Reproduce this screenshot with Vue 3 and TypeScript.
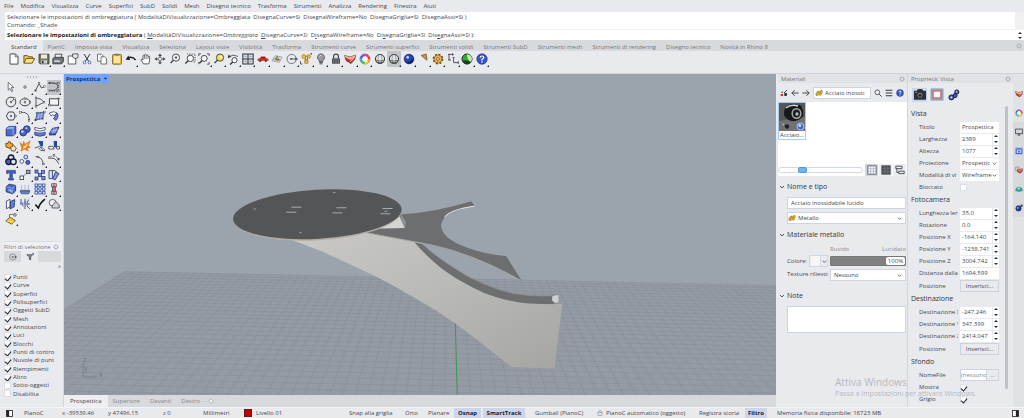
<script setup lang="ts">
import { h, ref } from 'vue'

const arc = (r: number, w: number): string => {
  const colours = ['#ff9c1a', '#f4e11c', '#3fc43a', '#21b8d8', '#3a55e8', '#a23be0', '#e82a8c', '#ee3024']
  const len = 2 * Math.PI * r
  const part = len / colours.length
  return colours
    .map((c, i) => `<circle cx="6" cy="6" r="${r}" fill="none" stroke="${c}" stroke-width="${w}" stroke-dasharray="${part} ${len - part}" stroke-dashoffset="${-part * i}"/>`)
    .join('')
}
const line = (d: string, extra = ''): string =>
  `<path d="${d}" fill="none" stroke="#33363c" stroke-width=".8" ${extra}/>`
const dots = (...p: number[][]): string =>
  p.map(([x, y]) => `<rect x="${x - 0.8}" y="${y - 0.8}" width="1.6" height="1.6" fill="#fff" stroke="#444" stroke-width=".5"/>`).join('')
const lens = (x: number, y: number, r: number, fill = '#f8f8fa'): string =>
  `<circle cx="${x}" cy="${y}" r="${r}" fill="${fill}" stroke="#3a3d43" stroke-width=".9"/><path d="M${x - r * 0.7} ${y + r * 0.7}L${x - r - 1.8} ${y + r + 1.8}" stroke="#3a3d43" stroke-width="1.4"/>`
const ball = (c: string, d: string): string =>
  `<circle cx="6" cy="6" r="4.8" fill="${c}" stroke="${d}" stroke-width=".7"/><circle cx="4.6" cy="4.2" r="1.5" fill="#fff" opacity=".7"/>`
const wire = `<circle cx="6" cy="6" r="4.6" fill="#e4e4e6" stroke="#33363c"/><ellipse cx="6" cy="6" rx="2" ry="4.6" fill="none" stroke="#777" stroke-width=".6"/><path d="M1.6 7.2Q6 9 10.4 7.2" fill="none" stroke="#555" stroke-width=".8"/><path d="M2.5 9Q6 11 9.5 9" stroke="#444" fill="none"/>`
const layers = `<path d="M.6 2.4L6 4L11.4 2L11 6L7 10.6L2 7.5Z" fill="#c92c22" stroke="#3d2a2a" stroke-width=".6"/><path d="M.6 2.4L6 4.2L11.4 2L10.7 4.2L6.4 6.9L1.4 4.4Z" fill="#f4b48f"/><path d="M6 8.6L10.8 4.5" stroke="#f7e8e0" stroke-width=".8"/>`
const metal = `<path d="M1 7.5L4 3L7 3.5L10.5 2L11 5L9 9.5L6 8.5L2.5 10.5Z" fill="#e0b13a" stroke="#7c5b12" stroke-width=".7"/><path d="M3 7L5 5L6.5 6.5L9 4.2" fill="none" stroke="#7c5b12" stroke-width=".8"/>`

const icons: Record<string, string> = {
  newFile: '<path d="M2 .9H7.4L10 3.5V11.1H2Z" fill="#fff" stroke="#3a3d43" stroke-width=".9"/><path d="M7.2 1V3.8H10" fill="none" stroke="#3a3d43" stroke-width=".7"/>',
  open: '<path d="M.9 10V2.6H4.5L5.5 3.8H9.4V5.2" fill="#f0c84a" stroke="#4b3d16" stroke-width=".8"/><path d="M1 10.2L3.2 5.4H11.6L9.2 10.2Z" fill="#ffe07a" stroke="#4b3d16" stroke-width=".8"/>',
  save: '<path d="M1 1.2H11V10.8H2L1 9.8Z" fill="#727a5a" stroke="#33363c" stroke-width=".8"/><rect x="3" y="1.5" width="6" height="4" fill="#e9ecd8"/><rect x="3.2" y="7.2" width="5.8" height="3.4" fill="#c9cbc6"/><rect x="4" y="7.8" width="1.6" height="2.6" fill="#33363c"/>',
  print: '<path d="M3.2 5V1.2H10L8.8 5" fill="#f1f1f1" stroke="#33363c" stroke-width=".8"/><path d="M.8 5.6L2.5 4.3H11.4V8.6L9.8 10.8H.8Z" fill="#6f7278" stroke="#33363c" stroke-width=".8"/><rect x="2.2" y="7.4" width="6" height="1.6" fill="#d5d6d8"/>',
  props: '<path d="M1.2 3H5L8.8 3V11H1.2Z" fill="#fff" stroke="#3a3d43" stroke-width=".8"/><path d="M5.5 1L11 .8V4.6L8 5.6L5.6 4Z" fill="#e6e7ea" stroke="#3a3d43" stroke-width=".8"/>',
  cut: '<path d="M3 1L7.6 8.2M9 1L4.4 8.2" stroke="#33363c"/><circle cx="3.5" cy="9.5" r="1.4" fill="none" stroke="#4a63b8" stroke-width=".9"/><circle cx="8.5" cy="9.5" r="1.4" fill="none" stroke="#4a63b8" stroke-width=".9"/>',
  copy: '<path d="M1.5 1.2H5.4L7 2.8V8.2H1.5Z" fill="#fff" stroke="#55585e" stroke-width=".8"/><path d="M5 3.8H8.8L10.6 5.6V11H5Z" fill="#fff" stroke="#55585e" stroke-width=".8"/>',
  paste: '<rect x="1.6" y="1.6" width="8.8" height="9.6" rx=".6" fill="#f1c445" stroke="#6b5216" stroke-width=".8"/><rect x="3" y="3.2" width="6" height="6.8" fill="#ffe69a"/><rect x="4" y=".7" width="4" height="2" fill="#7a7d83"/>',
  undo: '<path d="M3 5.2Q7 2.8 10.6 7" fill="none" stroke="#1d1f23" stroke-width="1.5"/><path d="M.6 6.8L3.4 2.6L5.2 7Z" fill="#1d1f23"/>',
  hand: '<path d="M3.6 10.9L.9 6.8Q1.6 5.6 3 7V2.8Q3.8 1.8 4.5 2.8V1.8Q5.4.6 6.2 1.8V2.4Q7.2 1.2 8 2.6V3.4Q9.4 2.6 9.6 4V8L8.6 10.9Z" fill="#fbfbfc" stroke="#3a3d43" stroke-width=".8"/><path d="M4.5 3V6M6.2 2.5V6M8 3.4V6" stroke="#3a3d43" stroke-width=".6"/>',
  pan: '<path d="M6 .4L8 3H4ZM6 11.6L8 9H4ZM.4 6L3 4.2V7.8ZM11.6 6L9 4.2V7.8Z" fill="#44474d"/><path d="M6 2V10M2 6H10" stroke="#5c5f66" stroke-width="1.1"/><ellipse cx="6" cy="6" rx="1.8" ry="1.8" fill="#e9eaee" stroke="#5c5f66" stroke-width=".7"/>',
  zoomDyn: lens(7, 4.6, 3.6) + line('M7 2.8V6.2M5.8 4.5H8.2'),
  zoomWin: lens(6.4, 5.4, 3.2) + line('M3 1H11V9H9', 'stroke-dasharray="1.2 1"'),
  zoomExt: lens(6.2, 5.4, 3) + line('M.8 3V.8H3M9 .8H11.2V3M.8 9V11.2M11.2 9V11.2H9'),
  zoomSel: lens(7, 4.6, 3.6, '#f3e05a') + '<circle cx="8" cy="4" r="1.4" fill="#fff6a8"/>',
  undoView: lens(7.5, 7.2, 2.6) + line('M2 3.8Q6 .6 10.8 3.4', 'stroke-width="1.2"') + '<path d="M.6 5L1.6 1.4L4.2 4Z" fill="#33363c"/>',
  views: '<rect x=".8" y="1" width="10.4" height="10" fill="#d5dbe0" stroke="#33363c"/><path d="M6 1V11M.8 6H11.2" stroke="#33363c"/><path d="M2.6 3.4H4.6M7.6 3.4H9.6M2.6 8.6H4.6M7.6 8.6H9.6" stroke="#8791a0" stroke-width=".8"/>',
  car: '<path d="M.6 7.8V5.8L2.8 5.2L4 3.6H8L9.2 5.2L11.4 5.8V7.8Z" fill="#d12822"/><path d="M4.2 5L4.9 4H7.5L8 5Z" fill="#8c1512"/><circle cx="3.2" cy="8" r="1.1" fill="#332"/><circle cx="8.8" cy="8" r="1.1" fill="#332"/>',
  plane: '<path d="M.8 7.8L4.2 2.6L11.2 4L8.4 9.4Z" fill="#d9dcdf" stroke="#8b8f95" stroke-width=".6"/><path d="M2.4 5.2L9.8 6.6M1.8 6.6L9 8.2M5.8 3L3.6 8.2M8.4 3.4L6 8.8" stroke="#8b8f95" stroke-width=".5"/><path d="M4.6 6L8.6 7" stroke="#cf2b22" stroke-width="1.2"/><path d="M4.8 6L6.8 3.4" stroke="#2a9c38" stroke-width="1.2"/>',
  target: '<circle cx="5.6" cy="6" r="4.6" fill="none" stroke="#5a5d63" stroke-width=".8"/><path d="M5 6H11.8" stroke="#33363c" stroke-width=".8"/><circle cx="5" cy="6" r="1.1" fill="#5a5d63"/><path d="M9 4.6L11.6 6L9 7.4Z" fill="#55585e"/>',
  select: '<path d="M4 3.4L8 3.4L6.5 8.4Z" fill="none" stroke="#6b5216" stroke-width=".8"/><circle cx="3.8" cy="3.6" r="2" fill="#f3c32c" stroke="#7b5a10" stroke-width=".5"/><circle cx="8.8" cy="3.4" r="1.8" fill="#f3c32c" stroke="#7b5a10" stroke-width=".5"/><rect x="4.8" y="7" width="3.2" height="3.2" fill="#f0b41c" stroke="#7b5a10" stroke-width=".5"/><path d="M.4 8V11H2.4M10.4.4H11.8V2" fill="none" stroke="#222" stroke-width=".7"/>',
  bulb: '<path d="M6 .8A3.6 3.6 0 0 1 7.9 7.4V8.4H4.1V7.4A3.6 3.6 0 0 1 6 .8Z" fill="#9a9ca0" stroke="#4d5056" stroke-width=".8"/><path d="M4.2 9.4H7.8M4.6 10.8H7.4" stroke="#4d5056"/><path d="M4.6 3.4Q5 2.2 6.4 2.2" stroke="#f3f3f3" stroke-width=".8" fill="none"/>',
  lock: '<path d="M3.6 5.4V3.4Q3.6 1.2 6 1.2T8.4 3.4V5.4" fill="none" stroke="#3f4248" stroke-width="1.2"/><rect x="2" y="5.2" width="8" height="5.6" rx=".5" fill="#54575d"/><path d="M3 7H9M3 9H9" stroke="#85888e" stroke-width=".6"/>',
  layers,
  wheel: '<circle cx="6" cy="6" r="5" fill="#fff" stroke="#444" stroke-width=".6"/>' + arc(3.9, 2.1),
  wire,
  blueBall: ball('#1f46b4', '#14214f') + '<path d="M6 10.7A4.7 4.7 0 0 0 10.6 5Q8 9 3 9.4" fill="#0c1f63"/>',
  flag: '<path d="M4.2 2.4L9.2 1L10 7.2L7.4 5.2Z" fill="#e78f2a" stroke="#4c3413" stroke-width=".6"/>',
  gear: '<circle cx="6" cy="6" r="4.4" fill="#e4a63a" stroke="#60420f" stroke-width="2" stroke-dasharray="1.8 1.65"/><circle cx="6" cy="6" r="3.9" fill="#e9b450" stroke="#8a6116" stroke-width=".7"/><circle cx="6" cy="6" r="1.4" fill="#f3f1ec" stroke="#60420f" stroke-width=".7"/>',
  dims: line('M1 1.4H5M2 1.4V7M1 7H4M6.6 4.6V9.6H11.2M5.6 4.6H7.6M11.2 8V11') + '<path d="M5 0L7 1.4L5 2.8Z" fill="#444"/>',
  greenBall: '<circle cx="6" cy="6" r="5" fill="#36a832" stroke="#1a2b1a" stroke-width="1"/><path d="M6 1.2A4.8 4.8 0 0 1 10 9Q6 7 6 1.2Z" fill="#c9e8b4"/><path d="M1.6 8Q5 6 10 9.2A4.8 4.8 0 0 1 1.6 8Z" fill="#1c3a1c"/>',
  help: '<circle cx="6" cy="6" r="5.2" fill="#3654c8" stroke="#1e2f85" stroke-width=".7"/><path d="M4.2 4.6Q4.3 3 6 3T7.8 4.6Q7.8 5.6 6 6.4V7.4" fill="none" stroke="#fff" stroke-width="1.2"/><circle cx="6" cy="9" r=".8" fill="#fff"/>',
  arrow: '<path d="M3.2 1.4L9 6.6H6.2L7.8 10L6.6 10.6L5 7.4L3.2 9.2Z" fill="#fff" stroke="#44474d" stroke-width=".7"/>',
  point: '<circle cx="6" cy="6" r="1.2" fill="#fff" stroke="#44474d" stroke-width=".8"/>',
  polyline: line('M1.6 9.6L5 2.4L7.4 7L10.4 5.6') + dots([1.6, 9.6], [5, 2.4], [10.4, 5.6]),
  curvePts: line('M1.6 2H5Q10.8 3 9.6 6.4Q8.8 10 2 9.4') + line('M1.6 2H10.6M10.6 2V10M2 10H10.6', 'stroke-dasharray="1 1"') + dots([1.6, 2], [10.4, 2], [1.8, 9.8], [10.2, 9.8]),
  circle: '<circle cx="6" cy="6" r="4.8" fill="none" stroke="#33363c" stroke-width=".9"/>' + line('M6 6L9.4 2.8') + dots([6, 6], [9.4, 2.6]),
  ellipse: '<ellipse cx="6" cy="6.2" rx="5" ry="3.6" fill="none" stroke="#33363c" stroke-width=".9"/>' + dots([6, 6.2], [6, 2.6], [11, 6.2]),
  arcPts: line('M2 1.8V10.4L10 6.2Q8 2.4 2 1.8') + dots([2, 1.8], [2, 10.4], [10, 6.2]),
  rect: '<rect x="1.4" y="2.8" width="9.2" height="6.4" fill="#f4f4f6" stroke="#33363c" stroke-width=".9"/>' + dots([1.4, 9.2], [10.6, 2.8]),
  polygon: '<path d="M1.4 6L3.6 2H8.4L10.6 6L8.4 10H3.6Z" fill="none" stroke="#33363c" stroke-width=".9"/>' + dots([6, 6], [10.4, 6]),
  fillet: line('M1 2.4H4.5Q9.6 3 10 8V11', 'stroke-width="1.2"') + dots([1.4, 2.4], [10, 10.4]),
  surface: '<path d="M3 3L10.4 2L8.6 8.6L1.6 10Z" fill="#5f7fdc" stroke="#22305f" stroke-width=".7"/><path d="M5.4 2.8L4 9.4M8 2.4L6.4 9M2.6 5.4L9.8 4.4M2 7.8L9.2 6.6" stroke="#ccd7fa" stroke-width=".5"/>' + dots([3, 3], [10.4, 2], [8.6, 8.6], [1.6, 10]),
  sweep: '<path d="M1.4 3Q6 .4 9 3L6.6 5.4Q4.6 4 3 6Z" fill="#fff" stroke="#22305f" stroke-width=".7"/><path d="M9 3Q11.6 6 8 10.4L5.4 8.6Q7.8 6.8 6.6 5.4Z" fill="#5f7fdc" stroke="#22305f" stroke-width=".7"/>',
  box: '<path d="M1.2 3.4L4 1.4H10.8V8.4L8.4 10.8H1.2Z" fill="#4a6bd0" stroke="#1d2a5e" stroke-width=".8"/><path d="M1.4 3.6H8.2V10.6" fill="none" stroke="#b8c8f8" stroke-width=".7"/><path d="M1.8 3.2L4.2 1.8H10.2L8.2 3.2Z" fill="#93aaf0"/>',
  spheres: '<circle cx="7.8" cy="4.2" r="3.4" fill="#4467d2" stroke="#1d2a5e" stroke-width=".8"/><circle cx="4.2" cy="7.6" r="3.4" fill="#4467d2" stroke="#1d2a5e" stroke-width=".8"/><circle cx="3.4" cy="6.6" r="1.3" fill="#c3d0fa"/><circle cx="7.2" cy="3.2" r="1" fill="#c3d0fa"/>',
  pipe: '<path d="M.8 2.4V4.8Q6 7.4 11.2 4.8V2.4Q6 5 .8 2.4Z" fill="#fff" stroke="#22305f" stroke-width=".7"/><path d="M.8 7V10Q6 12.4 11.2 10V7Q6 9.6.8 7Z" fill="#5f7fdc" stroke="#22305f" stroke-width=".7"/>',
  mesh: '<path d="M1 9L4.4 3.4L11 2L8 8.6Z" fill="#5f7fdc" stroke="#1d2a5e" stroke-width=".8"/><path d="M2.6 6.4L9.8 5M6.4 3L4 9M8.8 2.6L6 8.8" stroke="#dbe3fd" stroke-width=".5"/><path d="M1 9V10.4L8 10.2V8.6" fill="#33489c"/>',
  puzzle: '<path d="M.8 3.4H3Q3 1 4.6 1.4T5.4 3.4L8 4V7L5 8.4L1 7Z" fill="#f0a72c" stroke="#51390d" stroke-width=".8"/><path d="M5.4 7.6L8.6 5.6L11.4 8L9.6 11.2L6.4 10.6Z" fill="#e9e3d2" stroke="#51390d" stroke-width=".8"/>',
  explode: '<path d="M.8 2.6L3.6 5L4.6 1.4L6.2 4.2L11.2.8L9.2 5.8L11.4 7.4L8.2 8.2L9.4 11L5.4 9.2L2 11.2L2.8 7.6Z" fill="#f0821c" stroke="#b8540c" stroke-width=".4"/><path d="M3.4 9.6L5 6.2L9.6 2.8L7 7.4Z" fill="#ffd978"/>',
  trim: '<path d="M4 1H9V6.4H6.6Z" fill="#264aa4"/>' + line('M.8 8L5.4 6.4L10.6 10.6H7L4.6 8') + '<path d="M6 7L10.6 9V11Z" fill="#fff" stroke="#444" stroke-width=".5"/>',
  split: '<path d="M5.6 1H9V8L6 7Z" fill="#264aa4"/><path d="M.8 6.4H5L6.2 9H.8ZM8.2 6.4H11.4V9H8.8Z" fill="#fff" stroke="#33363c" stroke-width=".8"/>',
  group: '<circle cx="6" cy="3.8" r="2.8" fill="#cdd8fa" stroke="#14182a" stroke-width="1.3"/><circle cx="3.6" cy="7.8" r="2.8" fill="#3d62cf" stroke="#14182a" stroke-width="1.3"/><circle cx="8.4" cy="7.8" r="2.8" fill="#dfe5f8" stroke="#14182a" stroke-width="1.3"/>',
  ungroup: '<circle cx="6.8" cy="3" r="1.9" fill="#cdd8fa" stroke="#2c3a6e" stroke-width=".8"/><circle cx="2.8" cy="7.4" r="1.9" fill="#fff" stroke="#2c3a6e" stroke-width=".8"/><circle cx="8.8" cy="8.4" r="2.1" fill="#3d62cf" stroke="#2c3a6e" stroke-width=".8"/>',
  edit: line('M1.4 2.6Q8 2.4 9.4 10', 'stroke-width="1.2"') + dots([4, 3], [9.4, 10]),
  editPts: line('M1 4.2Q7.4 2.8 10.8 9.8', 'stroke-width="1.1"') + line('M1 3L6 1L10.6 5', 'stroke-dasharray="1 1"') + dots([1.4, 3.8], [6, 1.4], [10.6, 5.2]),
  text: '<path d="M1.6 1.4H10.4V4.4H8.8V3.6H7.4V9.4H8.4V11H3.6V9.4H4.8V3.6H3.2V4.4H1.6Z" fill="#3c62cf" stroke="#1d2a5e" stroke-width=".6"/>',
  move: '<rect x="1" y="7" width="3.6" height="3.6" fill="#fff" stroke="#33363c" stroke-width=".8"/><rect x="7.6" y="1.2" width="3.4" height="3.4" fill="#8fa8ef" stroke="#33363c" stroke-width=".8"/>' + line('M4.8 6.6L7.4 4.8', 'stroke-dasharray="1 .8"'),
  array: '<g fill="#6f8de4" stroke="#22305f" stroke-width=".7"><rect x="1" y="1" width="3" height="3"/><rect x="7.6" y="1.4" width="3" height="3"/><rect x="4.4" y="4.6" width="3" height="3"/><rect x="1" y="8" width="3" height="3"/><rect x="7.8" y="7.6" width="3.2" height="3.2"/></g>',
  rotate: '<path d="M1 1.6H4.4V9.6H1Z" fill="#dfe6fb" stroke="#22305f" stroke-width=".8"/><path d="M7.6 3L11 4.6L7 11L4.6 9.6Z" fill="#7d99e8" stroke="#22305f" stroke-width=".8"/>' + line('M4 1.6Q7.6 1 8.8 3'),
  solid: '<path d="M1.2 3.6L4.2 1.2L10.6 2.4V8L7.6 10.8L1.2 8.8Z" fill="#4a6bd0" stroke="#1d2a5e" stroke-width=".8"/><path d="M1.4 3.8L7.6 5.2V10.4M7.6 5.2L10.4 2.6" stroke="#aec0f6" stroke-width=".6" fill="none"/><path d="M3.4 7H6V9.4" stroke="#fff" fill="none" stroke-width=".8"/>',
  loft: '<path d="M1 8.2H11L9.6 10.8H2.4Z" fill="#5f7fdc" stroke="#22305f" stroke-width=".6"/><path d="M2.6 2V7M6 2V7M9.4 2V7" stroke="#a9bbee" stroke-width="1"/><path d="M1.2 7.4H10.8" stroke="#33363c" stroke-width=".7"/>',
  gridArr: '<g fill="#e7ecfb" stroke="#2e4aa3" stroke-width=".8"><rect x="1" y="1" width="2.4" height="2.4"/><rect x="4.8" y="1" width="2.4" height="2.4"/><rect x="8.6" y="1" width="2.4" height="2.4"/><rect x="1" y="4.8" width="2.4" height="2.4"/><rect x="4.8" y="4.8" width="2.4" height="2.4"/><rect x="8.6" y="4.8" width="2.4" height="2.4"/><rect x="1" y="8.6" width="2.4" height="2.4"/><rect x="4.8" y="8.6" width="2.4" height="2.4"/><rect x="8.6" y="8.6" width="2.4" height="2.4"/></g>',
  mirror: '<rect x="3.8" y=".8" width="4.4" height="3" fill="#e6e7ea" stroke="#33363c" stroke-width=".8"/><rect x="3.8" y="8.2" width="4.4" height="3" fill="#e6e7ea" stroke="#33363c" stroke-width=".8"/><path d="M4.6 3.8V8.2M7.4 3.8V8.2" stroke="#33363c" stroke-width=".8"/><path d="M6 1.4V10.8" stroke="#d8262a" stroke-width="1.3"/>',
  cage: '<path d="M1.4 3L5 1.4V9L1.4 10.6Z" fill="#fff" stroke="#22305f" stroke-width=".8"/><path d="M5.6 3.4L9.8 1.6L9.2 8.8L5 11Z" fill="#5f7fdc" stroke="#22305f" stroke-width=".8"/>',
  tools: line('M2 1V5L4.4 8.4M6 .8V11M9.6 1.6L8 5.4V8L11 11', 'stroke-width="1.4"') + '<path d="M1 4.4H4.6V6.4H1ZM5 3H7.2V6.4H5ZM7.6 5H10.8V6.8H7.6Z" fill="#6a86d8"/>',
  check: '<path d="M1.4 6.6L4.4 10Q6 5 11 1.2" fill="none" stroke="#16181c" stroke-width="1.6"/>',
  shapes: '<circle cx="4.6" cy="4.8" r="3.4" fill="#f0f0f2" stroke="#44474d" stroke-width=".8"/><path d="M4 8L7.8 3.4L11.2 7V10H4Z" fill="#cfd0d4" stroke="#44474d" stroke-width=".8"/>',
  ship: '<path d="M.8 8L5 4L10.4 7.6L6.6 11.2Z" fill="#f0c23a" stroke="#6a4c10" stroke-width=".8"/><path d="M2 8L8.6 9.2" stroke="#fff0a8" stroke-width=".8"/><path d="M4.6 4V1.6H8.8V.8H11V3H8.8V2.2" fill="#fff" stroke="#44474d" stroke-width=".8"/>',
  cog: '<circle cx="6" cy="6" r="3.4" fill="none" stroke="#b4b6bb" stroke-width="2"/><circle cx="6" cy="6" r="4.8" fill="none" stroke="#b4b6bb" stroke-width="1.4" stroke-dasharray="2 1.8"/>',
  filter: '<path d="M1.2 2.6H10L7 6V10.6L5 9.4V6Z" fill="#8b8e94" stroke="#2d3036" stroke-width=".9"/><path d="M9 .6H11.4V3" stroke="#2d3036" stroke-width=".9" fill="none"/>',
  dropper: '<path d="M6 6L10.6 1.4" stroke="#44474d" stroke-width="1.5"/><path d="M1 5L5 3.4L4 6Z" fill="#55585e"/><path d="M1 7.4H4.6V10.6H1Z" fill="#d6342b"/><path d="M6.4 6H10.4V10.4H6.4Z" fill="#33363c"/>',
  left: '<path d="M11.4 6H1.2M5.4 1.8L1.2 6L5.4 10.2" fill="none" stroke="#43464d" stroke-width="1.5"/>',
  right: '<path d="M.6 6H10.8M6.6 1.8L10.8 6L6.6 10.2" fill="none" stroke="#43464d" stroke-width="1.5"/>',
  metal,
  search: '<circle cx="5" cy="5" r="3.6" fill="none" stroke="#43464d" stroke-width="1.2"/><path d="M7.6 7.6L11.4 11.4" stroke="#43464d" stroke-width="1.5"/>',
  menu: '<path d="M1 2H11M1 6H11M1 10H11" stroke="#33363c" stroke-width="1.6"/>',
  thumbs: '<rect x="1" y="1" width="10" height="10" fill="#f2f3f6" stroke="#44474d" stroke-width=".9"/><path d="M1 4.3H11M1 7.7H11M4.3 1V11M7.7 1V11" stroke="#8d9097" stroke-width=".5"/>',
  rows: '<rect x="1" y="1" width="10" height="10" fill="#55585e" stroke="#44474d"/><path d="M1 4.3H11M1 7.7H11M4.3 1V11M7.7 1V11" stroke="#797c83" stroke-width=".5"/>',
  tree: '<path d="M1 1.4H8.4V4.4H1ZM4.6 7.4H11V10.4H4.6ZM2.2 4.4V9H4.6" fill="none" stroke="#44474d" stroke-width="1.1"/>',
  camera: '<path d="M.4 2.6H3L4.2 1H7.8L9 2.6H11.6V10.8H.4Z" fill="#2e3138"/><circle cx="6" cy="6.6" r="2.9" fill="#7b818c" stroke="#0e1014" stroke-width=".7"/><circle cx="6" cy="6.6" r="1.4" fill="#23262c"/><path d="M1.4 4H3.4" stroke="#9ea2ab" stroke-width=".7"/>',
  frame: '<rect x=".4" y=".8" width="11.2" height="10.4" fill="#8fb2c6" stroke="#6b8ea3" stroke-width=".5"/><rect x="2.4" y="2.8" width="7.2" height="6.4" fill="#fff" stroke="#e24a48" stroke-width="1"/>',
  chain: '<g fill="#3f5cae" stroke="#121b3c" stroke-width=".9"><circle cx="8.8" cy="3" r="2.1"/><circle cx="7" cy="6.6" r="2.1"/><circle cx="3.4" cy="8.4" r="2.5"/></g><circle cx="3.4" cy="8.4" r=".9" fill="#e9eefb"/><circle cx="8.6" cy="2.8" r=".8" fill="#d6e0fb"/>',
  monitor: '<rect x="1" y="1.6" width="10" height="7" fill="#d4d7da" stroke="#2d3036" stroke-width="1.1"/><path d="M4 10.6H8M6 8.6V10.6" stroke="#2d3036" stroke-width="1.2"/>',
  render: '<rect x=".8" y="1.2" width="10.4" height="9.6" fill="#3f66cf"/><path d="M.8 3H11.2" stroke="#c8d4f6" stroke-width="1"/><path d="M2.6 4.8H9.4V9H2.6Z" fill="#cfdcfb"/><circle cx="6" cy="7" r="1.5" fill="#3f66cf"/>',
  docs: '<path d="M1 1.6H6V7H1Z" fill="#ddd" stroke="#555" stroke-width=".7"/><path d="M3.6 4.4L7 5.4L11 3.8V8L8 10.8L4 9Z" fill="#cf4a32" stroke="#4a2a22" stroke-width=".6"/><path d="M4 5.4L7.2 7L10.6 5" stroke="#f6c6a8" fill="none"/>',
  env: '<path d="M.8 8.4A5.2 5.2 0 0 1 11.2 8.4Q6 11 .8 8.4Z" fill="#2fae9d" stroke="#1b6570" stroke-width=".6"/><path d="M3 5.6Q5 2.6 8 4.4L6 7Z" fill="#9fe2e8"/>',
  globe: '<circle cx="5.2" cy="6.6" r="4" fill="#234596" stroke="#111a3a" stroke-width=".9"/><circle cx="4" cy="5.8" r="1.3" fill="#9eb5ee"/><path d="M8.4 1H11.4V4H8.4Z" fill="#2d3036"/>',
  panelL: '<rect x=".8" y=".8" width="10.4" height="10.4" fill="#fff" stroke="#222" stroke-width="1.4"/><rect x="1" y="1" width="4.4" height="10" fill="#222"/>',
  panelR: '<rect x=".8" y=".8" width="10.4" height="10.4" fill="#fff" stroke="#222" stroke-width="1.4"/><rect x="6.6" y="1" width="4.4" height="10" fill="#222"/>',
  chevron: '<path d="M2 4L6 8L10 4" fill="none" stroke="#3f4248" stroke-width="1.8"/>',
  drop: '<path d="M2 4H10L6 9Z" fill="#17356f"/>',
  padlock: '<path d="M3.4 5V3Q3.4.8 6 .8T8.6 3V5" fill="none" stroke="#777a80"/><rect x="2" y="5" width="8" height="6" fill="none" stroke="#777a80"/>',
  diamond: '<path d="M6 1.4L10.6 6L6 10.6L1.4 6Z" fill="#f6f6f8" stroke="#94979d" stroke-width="1.2"/>',
}

const Ic = (p: { n: string }) =>
  h('svg', { viewBox: '0 0 12 12', 'aria-hidden': 'true', innerHTML: icons[p.n] })
Ic.props = ['n']

const menus = ['File', 'Modifica', 'Visualizza', 'Curve', 'Superfici', 'SubD', 'Solidi', 'Mesh', 'Disegno tecnico', 'Trasforma', 'Strumenti', 'Analizza', 'Rendering', 'Finestra', 'Aiuti']
const tabs = ['Standard', 'PianiC', 'Imposta vista', 'Visualizza', 'Seleziona', 'Layout viste', 'Visibilità', 'Trasforma', 'Strumenti curve', 'Strumenti superfici', 'Strumenti solidi', 'Strumenti SubD', 'Strumenti mesh', 'Strumenti di rendering', 'Disegno tecnico', 'Novità in Rhino 8']

interface Tool { n: string; fly?: boolean; on?: boolean }
const tool = (s: string): Tool => ({ n: s.replace(/[+*]/g, ''), fly: s.includes('+'), on: s.includes('*') })
const toolbar = 'newFile open save+ print+ props cut copy paste undo+ hand pan zoomDyn zoomWin zoomExt+ zoomSel+ undoView+ views+ car+ plane+ target+ select+ bulb+ lock+ layers+ wheel+ wire wire+* blueBall+ flag+ gear+ dims+ greenBall+ help+'.split(' ').map(tool)
const palette = 'arrow point+ polyline+ curvePts+* circle+ ellipse+ arcPts+ rect+ polygon+ fillet+ surface+ sweep+ box+ spheres+ pipe+ mesh+ puzzle+ explode trim split group+ ungroup+ edit+ editPts+ text move+ array rotate+ solid+ loft+ gridArr+ mirror+ cage+ tools+ check+ shapes+ ship+'.split(' ').map(tool)

const filters = ref(
  ['Punti', 'Curve', 'Superfici', 'Polisuperfici', 'Oggetti SubD', 'Mesh', 'Annotazioni', 'Luci', 'Blocchi', 'Punti di contro', 'Nuvole di punt', 'Riempimenti', 'Altro', 'Sotto-oggetti', 'Disabilita']
    .map((label, i) => ({ label, on: i < 13 })),
)

type Kind = 'text' | 'num' | 'select' | 'check' | 'button' | 'file'
interface Row { label: string; kind: Kind; value: string }
const row = (label: string, kind: Kind, value = ''): Row => ({ label, kind, value })
const groups: { title: string; rows: Row[] }[] = [
  { title: 'Vista', rows: [row('Titolo', 'text', 'Prospettica'), row('Larghezza', 'num', '2389'), row('Altezza', 'num', '1077'), row('Proiezione', 'select', 'Prospettic'), row('Modalità di vi', 'select', 'Wireframe'), row('Bloccato', 'check')] },
  { title: 'Fotocamera', rows: [row('Lunghezza ler', 'num', '35.0'), row('Rotazione', 'num', '0.0'), row('Posizione X', 'num', '-164.140'), row('Posizione Y', 'num', '-1238.741'), row('Posizione Z', 'num', '3004.742'), row('Distanza dalla', 'text', '1694.599'), row('Posizione', 'button', 'Inserisci...')] },
  { title: 'Destinazione', rows: [row('Destinazione X', 'num', '-247.246'), row('Destinazione Y', 'num', '347.399'), row('Destinazione Z', 'num', '2414.047'), row('Posizione', 'button', 'Inserisci...')] },
  { title: 'Sfondo', rows: [row('NomeFile', 'file', '(nessuno)'), row('Mostra', 'check', 'on'), row('Grigio', 'check', 'on')] },
]
const sideTabs = ['layers', 'wheel', 'monitor', 'render', 'docs', 'env', 'globe']

// Ground grid, projected towards a single vanishing point.
const vp = { x: 448, y: 66 }
const rays: string[] = []
for (let i = -75; i <= 75; i++) {
  rays.push(`M${vp.x} ${vp.y}L${(vp.x + 9 + i * 13).toFixed(1)} 400`)
}
const courses: string[] = []
for (let inv = 1 / 204; inv > 1 / 360; inv -= 0.0000627) {
  const y = vp.y + 1 / inv
  courses.push(`M64 ${y.toFixed(1)}L780 ${(y + 15).toFixed(1)}`)
}
const gridPath = rays.join('') + courses.join('')
</script>

<template>
  <div class="app">
    <nav class="menu">
      <button v-for="m in menus" :key="m">{{ m }}</button>
    </nav>

    <section class="command">
      <div class="history">
        <p>Selezionare le impostazioni di ombreggiatura ( ModalitàDiVisualizzazione=Ombreggiata&nbsp; DisegnaCurve=Sì&nbsp; DisegnaWireframe=No&nbsp; DisegnaGriglia=Sì&nbsp; DisegnaAssi=Sì )</p>
        <p>Comando: _Shade</p>
      </div>
      <div class="prompt">
        <p><b>Selezionare le impostazioni di ombreggiatura</b> ( <u>M</u>odalitàDiVisualizzazione=<i>Ombreggiata</i>&nbsp; <u>D</u>isegnaCurve=<i>Sì</i>&nbsp; D<u>i</u>segnaWireframe=<i>No</i>&nbsp; Di<u>s</u>egnaGriglia=<i>Sì</i>&nbsp; Dis<u>e</u>gnaAssi=<i>Sì</i> ):</p>
        <span class="spin"><button aria-label="Su"></button><button aria-label="Giù"></button></span>
      </div>
    </section>

    <nav class="tabs">
      <button v-for="(t, i) in tabs" :key="t" :class="{ active: i === 0 }">{{ t }}</button>
      <Ic n="cog" class="i6 push" />
    </nav>

    <div class="toolbar">
      <div class="tools">
        <button v-for="(t, i) in toolbar" :key="i" class="tool" :class="{ fly: t.fly, on: t.on }" :aria-label="t.n"><Ic :n="t.n" class="i12" /></button>
      </div>
    </div>

    <main>
      <aside class="left">
        <div class="grip"></div>
        <div class="palette">
          <button v-for="(t, i) in palette" :key="i" class="tool" :class="{ fly: t.fly, on: t.on }" :aria-label="t.n"><Ic :n="t.n" class="i12" /></button>
        </div>
        <header class="bar"><span>Filtri di selezione</span><Ic n="cog" class="i6" /></header>
        <div class="ftabs">
          <button aria-label="Osnap"><Ic n="target" class="i8" /></button>
          <button class="active" aria-label="Filtro"><Ic n="filter" class="i8" /></button>
        </div>
        <div class="more">»</div>
        <div class="filters">
          <label v-for="f in filters" :key="f.label"><input v-model="f.on" type="checkbox" /><span>{{ f.label }}</span></label>
        </div>
      </aside>

      <section class="view">
        <div class="scene">
          <svg class="canvas" viewBox="64 74 711 321" preserveAspectRatio="xMinYMin slice" aria-label="Vista prospettica">
            <defs>
              <clipPath id="ground"><path d="M64 309L124 271L775 285V400H64Z" /></clipPath>
              <linearGradient id="body" x1="0" y1="0" x2="1" y2="1">
                <stop offset="0" stop-color="#cbcac7" /><stop offset=".5" stop-color="#b9b9b7" /><stop offset="1" stop-color="#a5a5a2" />
              </linearGradient>
            </defs>
            <rect x="0" y="0" width="1600" height="900" fill="#9ba3ac" />
            <path d="M64 309L124 271L775 285V400H64Z" fill="#949ba4" />
            <path :d="gridPath" clip-path="url(#ground)" fill="none" stroke="#868d97" stroke-width=".5" />
            <path d="M454.700 321L456.700 395" stroke="#3f9a4a" stroke-width="1" />
            <path d="M289 239C322 250 345 262 377 277C405 292 430 306 453 322C474 337 492 352 511 366.700L554 368L561.500 303.500L553 304C525 304 498 299 460 280.500C440 269 426 256 414 242L412 236L360 226Z" fill="url(#body)" />
            <path d="M414 242C426 256 440 269 460 280.500C490 299 520 305 554 303.500L552.500 295.500C515 297 495 290 467 276C447 264 434 255 422 244Z" fill="#6d6e70" />
            <path d="M422 244C434 255 447 264 467 276C495 290 515 297 552.500 295.500" fill="none" stroke="#8a8b8b" stroke-width=".7" />
            <path d="M551.500 296L557.700 294.800V302L554 302.400L551.500 300Z" fill="#d0d0ce" />
            <path d="M402 214Q435 212 470.700 201L474 206C452 208 440.500 217 440.700 226C441 240 470 252 505.700 256L520.700 280C482 258 445 246 413 241Q385 236 365 232Z" fill="#6d6e70" />
            <path d="M474 206C457 208 448 212 444 217" fill="none" stroke="#e3e3e2" stroke-width="1" />
            <path d="M365 232.500Q385 236 413 241.500C445 246 482 258 519 280" fill="none" stroke="#a5a29e" stroke-width=".8" />
            <path d="M376 229L399 216L404.300 227.800L380 228.200Z" fill="#d5d5d2" />
            <path d="M400.500 214L405.500 221.500L404.500 227.500L400 217Z" fill="#909294" />
            <g transform="rotate(-3.400 317 214)">
              <ellipse cx="317" cy="215.300" rx="84" ry="24.700" fill="#b1aca6" />
              <ellipse cx="317" cy="214" rx="84.300" ry="24.500" fill="#535557" />
            </g>
            <path d="M291 207H301M286 212H296M336 207.600H346M332 212.700H342M382 208.300H392M380 213.600H390M384 211H387M253.500 208.800H255.500M333 192.400H335M299 232.500H301" stroke="#bfc1c4" stroke-width=".8" />
            <path d="M83 362V376.500H97" fill="none" stroke="#757c85" stroke-width=".8" />
            <g class="axes"><text x="83" y="362">z</text><text x="84" y="371">y</text><text x="99" y="377">x</text></g>
          </svg>
          <button class="vtitle"><b>Prospettica</b><Ic n="drop" class="i5" /></button>
        </div>
        <nav class="vtabs">
          <button class="active">Prospettica</button><button>Superiore</button><button>Davanti</button><button>Destro</button>
          <Ic n="diamond" class="i6" />
        </nav>
      </section>

      <aside class="materials">
        <header class="bar"><span>Materiali</span><Ic n="cog" class="i6" /></header>
        <div class="mtools">
          <button aria-label="Seleziona"><Ic n="dropper" class="i8" /></button>
          <button aria-label="Indietro"><Ic n="left" class="i8" /></button>
          <button aria-label="Avanti"><Ic n="right" class="i8" /></button>
          <label class="field named"><Ic n="metal" class="i8" /><input aria-label="Nome materiale" value="Acciaio inossic" /></label>
          <button aria-label="Cerca"><Ic n="search" class="i8" /></button>
          <button aria-label="Menu"><Ic n="menu" class="i8" /></button>
          <button aria-label="Aiuto"><Ic n="help" class="i8" /></button>
        </div>
        <div class="list">
          <button class="thumb">
            <svg viewBox="0 0 26 28" class="pic" aria-hidden="true">
              <rect width="26" height="28" fill="#55575a" /><path d="M0 18L26 14V28H0Z" fill="#6f7173" />
              <path d="M5 9Q6 2 13 1L21 2Q25 6 24 13Q20 19 12 18Q4 15 5 9Z" fill="#17181a" />
              <path d="M7 5Q12 1 19 3" stroke="#d6d8da" stroke-width="1.500" fill="none" />
              <ellipse cx="17.500" cy="10.500" rx="5" ry="5.500" fill="#a9abad" /><ellipse cx="17.500" cy="10.500" rx="3.600" ry="4" fill="#1c1d1f" />
              <ellipse cx="18" cy="11" rx="1.600" ry="1.800" fill="#b9bbbd" />
              <circle cx="8" cy="23.500" r="2.200" fill="#222" /><path d="M5 22L3.500 21" stroke="#ddd" /><circle cx="21.500" cy="23.500" r="3.500" fill="#3e66d6" stroke="#e8eefc" stroke-width=".7" /><circle cx="20.800" cy="22.500" r="1.500" fill="#c8d6fb" />
            </svg>
            <span>Acciaio...</span>
          </button>
          <div class="zoomrow">
            <input class="slider" type="range" min="0" max="100" value="25" aria-label="Dimensione anteprima" />
            <button class="on" aria-label="Miniature"><Ic n="thumbs" class="i10" /></button>
            <button aria-label="Elenco"><Ic n="rows" class="i10" /></button>
            <button aria-label="Struttura"><Ic n="tree" class="i10" /></button>
          </div>
        </div>
        <div class="form">
          <h2><Ic n="chevron" class="i6" />Nome e tipo</h2>
          <div class="block">
            <input class="field" aria-label="Nome" value="Acciaio inossidabile lucido" />
            <label class="field pick"><Ic n="metal" class="i8" /><select aria-label="Tipo"><option>Metallo</option></select><Ic n="chevron" class="i5" /></label>
          </div>
          <h2><Ic n="chevron" class="i6" />Materiale metallo</h2>
          <div class="metalgrid">
            <span></span>
            <div class="ends"><span>Ruvido</span><span>Lucidato</span></div>
            <label for="colour">Colore:</label>
            <button id="colour" class="colour"><i></i><Ic n="chevron" class="i5" /></button>
            <div class="gloss"><output>100%</output></div>
            <label for="relief" class="wide">Texture rilievo:</label>
            <div class="field pick"><select id="relief"><option>Nessuno</option></select><Ic n="chevron" class="i5" /></div>
          </div>
          <h2><Ic n="chevron" class="i6" />Note</h2>
          <div class="block"><textarea class="field" aria-label="Note"></textarea></div>
        </div>
      </aside>

      <aside class="props">
        <header class="bar"><span>Proprietà: Vista</span><Ic n="cog" class="i6" /></header>
        <div class="ptabs">
          <button class="on" aria-label="Vista"><Ic n="camera" class="i14" /></button>
          <button aria-label="Riquadro"><Ic n="frame" class="i14" /></button>
          <button aria-label="Collegamenti"><Ic n="chain" class="i12" /></button>
        </div>
        <div class="pbody">
          <div class="groups">
            <section v-for="g in groups" :key="g.title">
              <h2>{{ g.title }}</h2>
              <label v-for="r in g.rows" :key="r.label" class="prow" :class="r.kind">
                <span class="name">{{ r.label }}</span>
                <input v-if="r.kind === 'text'" class="cell" :value="r.value" />
                <span v-else-if="r.kind === 'num'" class="numbox"><input class="cell" :value="r.value" /><span class="spin"><button aria-label="Aumenta"></button><button aria-label="Diminuisci"></button></span></span>
                <span v-else-if="r.kind === 'select'" class="cell sel"><select><option>{{ r.value }}</option></select><Ic n="chevron" class="i5" /></span>
                <input v-else-if="r.kind === 'check'" type="checkbox" :checked="r.value === 'on'" />
                <button v-else-if="r.kind === 'button'" class="push-button">{{ r.value }}</button>
                <span v-else class="filebox"><input class="cell" :value="r.value" /><button>...</button></span>
              </label>
            </section>
          </div>
          <div class="scroll"></div>
        </div>
      </aside>

      <nav class="side">
        <button v-for="s in sideTabs" :key="s" :aria-label="s"><Ic :n="s" class="i8" /></button>
      </nav>
    </main>

    <footer class="status">
      <button aria-label="Pannello sinistro"><Ic n="panelL" class="i7" /></button>
      <span>PianoC</span><span>x -39539.46</span><span>y 47496.15</span><span>z 0</span><span>Millimetri</span>
      <span class="layer"><i></i>Livello 01</span>
      <button>Snap alla griglia</button><button>Orto</button><button>Planare</button>
      <button class="lit">Osnap</button><button class="lit">SmartTrack</button>
      <button class="apart">Gumball (PianoC)</button>
      <button class="lockcell"><Ic n="padlock" class="i6" />PianoC automatico (oggetto)</button>
      <button>Registra storia</button><button class="lit">Filtro</button>
      <span class="apart">Memoria fisica disponibile: 18723 MB</span>
      <button aria-label="Pannello destro"><Ic n="panelR" class="i7" /></button>
    </footer>

    <div class="watermark"><strong>Attiva Windows</strong><span>Passa a Impostazioni per attivare Windows.</span></div>
  </div>
</template>

<style>
html, body { margin: 0; background: #e9eaee; }
</style>

<style scoped>
.app { position: relative; display: flex; flex-direction: column; height: 100vh; overflow: hidden; background: #e9eaee; color: #45484e; font: 6px/8px "Open Sans", "Noto Sans", sans-serif; }
.app * { box-sizing: border-box; }
button, input, select, textarea { margin: 0; padding: 0; border: 0; border-radius: 0; background: none; color: inherit; font: inherit; min-width: 0; outline: 0; }
button { display: flex; align-items: center; justify-content: center; white-space: nowrap; }
p, h2 { margin: 0; }
svg { display: block; flex: none; }
.i5 { width: 5px; height: 5px; }
.i6 { width: 6px; height: 6px; }
.i7 { width: 7px; height: 7px; }
.i8 { width: 8px; height: 8px; }
.i10 { width: 10px; height: 10px; }
.i12 { width: 12px; height: 12px; }
.i14 { width: 14px; height: 13px; }
.push { margin-left: auto; }

.menu { display: flex; gap: 7px; height: 12px; padding: 0 4px; flex: none; }
.command { flex: none; margin-left: 5px; white-space: nowrap; }
.history { height: 17px; padding: 1px 2px; background: #fff; border-right: 9px solid #f0f0f0; }
.history p { line-height: 8px; }
.prompt { display: flex; justify-content: space-between; height: 11px; border-top: 1px solid #f0f1f5; background: #fff; padding-left: 2px; line-height: 10px; }
.prompt b { color: #16181c; }
.spin { display: grid; grid-template-rows: 1fr 1fr; width: 8px; background: #fff; }
.spin button::before { content: ""; border: 2px solid transparent; border-top: 0; border-bottom: 2px solid #2b2d32; }
.spin button:last-child::before { border-bottom: 0; border-top: 2px solid #2b2d32; }

.tabs { display: flex; align-items: stretch; height: 11px; margin-left: 5px; padding-right: 2px; background: #d8d9dc; color: #74777d; flex: none; }
.tabs button { padding: 2px 5px 0; }
.tabs button.active { background: #e9eaee; color: #45484e; padding: 2px 6px 0; }
.tabs .push { align-self: center; }
.toolbar { flex: none; height: 23px; padding: 0 7px; border-bottom: 1px solid #d2d4d9; }
.tools { display: flex; width: 482px; height: 16px; }
.tool { position: relative; flex: 1; }
.tool.fly::after { content: ""; position: absolute; right: 0; bottom: 0; border: 1px solid #1e2024; border-top-color: transparent; border-left-color: transparent; }
.tool.on { background: #c3c4c8; }

main { flex: 1; min-height: 0; display: grid; grid-template-columns: 64px 1fr 132px 105px 11px; }
.left { display: flex; flex-direction: column; padding: 0 2px 0 4px; border-right: 1px solid #d3d5da; min-height: 0; }
.grip { height: 6px; flex: none; margin: 0 22px; background: radial-gradient(circle, #b1b3b8 40%, transparent 50%) 0 2px / 3px 2px repeat-x; }
.palette { display: grid; grid-template-columns: repeat(4, 1fr); grid-template-rows: repeat(10, 1fr); height: 146px; flex: none; }
.bar { display: flex; align-items: center; justify-content: space-between; height: 9px; flex: none; padding: 0 2px 0 3px; background: #e1e2e6; color: #74777d; }
.left .bar { height: 10px; margin-top: 15px; padding: 0 2px 0 0; background: #eff0f3; border-top: 1px solid #dcdde1; white-space: nowrap; }
.ftabs { display: flex; height: 11px; background: #d8d9dc; flex: none; }
.ftabs button { width: 17px; }
.ftabs .active { background: #e9eaee; }
.more { height: 11px; flex: none; text-align: right; }
.filters { display: grid; grid-auto-rows: 1fr; height: 125px; flex: none; }
.filters label { display: flex; align-items: center; gap: 2px; white-space: nowrap; overflow: hidden; }
input[type="checkbox"] { appearance: none; display: grid; place-items: center; width: 7px; height: 7px; flex: none; background: #fff; border: 1px solid #dcdee6; }
input[type="checkbox"]:checked::after { content: ""; width: 3px; height: 5px; border: solid #202226; border-width: 0 1px 1px 0; transform: rotate(40deg); }

.view { display: flex; flex-direction: column; min-width: 0; min-height: 0; }
.scene { position: relative; flex: 1; min-height: 0; }
.canvas { position: absolute; inset: 0; width: 100%; height: 100%; }
.axes { font-size: 7px; fill: #6c737c; }
.vtitle { position: absolute; left: 0; top: 0; gap: 3px; height: 9px; padding: 0 1px 0 2px; background: #72a3f7; color: #17356f; }
.vtabs { display: flex; align-items: stretch; height: 12px; flex: none; background: #d8d9dc; color: #84878d; }
.vtabs button { padding: 0 5px; }
.vtabs .active { background: #eceef2; color: #45484e; padding: 0 6px; }
.vtabs svg { align-self: center; margin-left: 3px; }

.materials { display: flex; flex-direction: column; margin-left: 2px; border-right: 1px solid #d3d5da; min-height: 0; }
.mtools { display: flex; align-items: center; gap: 3px; height: 19px; flex: none; padding: 0 3px 0 2px; justify-content: space-between; }
.field { display: block; height: 12px; background: #fff; border: 1px solid #cfd4e2; padding: 0 3px; width: 100%; }
.named { display: flex; align-items: center; gap: 2px; width: 58px; padding: 0 0 0 1px; }
.named input { flex: 1; }
.list { display: flex; flex-direction: column; justify-content: space-between; height: 74px; flex: none; background: #fff; }
.thumb { flex-direction: column; width: 28px; height: 38px; border: 1px solid #9fcdf3; }
.pic { width: 26px; height: 28px; }
.zoomrow { display: flex; align-items: center; gap: 1px; height: 13px; padding-right: 1px; }
.zoomrow button { width: 13px; height: 12px; background: #eceef3; }
.zoomrow .on { background: #ccd5ef; }
.slider { appearance: none; flex: 1; height: 6px; margin-right: 1px; border: 1px solid #d4d9e6; border-radius: 3px; }
.slider::-webkit-slider-thumb { appearance: none; width: 9px; height: 6px; background: #6bb5f3; border: 1px solid #4f97d6; border-radius: 2px; }
.form { padding: 6px 1px 0; }
.form h2, .props h2 { font-size: 7px; font-weight: 400; color: #33363c; }
.form h2 { display: flex; align-items: center; gap: 2px; height: 10px; }
.block { display: grid; gap: 3px; padding: 5px 0 6px 8px; }
.pick { display: flex; align-items: center; gap: 2px; }
.block .pick { padding-left: 0; }
.pick select, .sel select { appearance: none; flex: 1; }
.metalgrid { display: grid; grid-template-columns: 20px 19px 1fr; column-gap: 2px; padding: 5px 0 10px 8px; align-items: center; white-space: nowrap; }
.metalgrid .ends { grid-column: 3; }
.metalgrid > span { grid-column: 1 / 3; }
.ends { display: flex; justify-content: space-between; color: #8a8d93; height: 10px; }
.colour { justify-content: space-around; height: 12px; border: 1px solid #d3d7e2; }
.colour i { width: 10px; height: 10px; background: #f6f6f7; border-right: 1px solid #d3d7e2; }
.gloss { display: flex; justify-content: flex-end; height: 10px; background: #818181; border: 1px solid #777; border-radius: 1px; }
.gloss output { width: 19px; background: #fff; border-radius: 2px; text-align: center; }
.metalgrid .wide { grid-column: 1 / 3; }
.metalgrid .pick { margin-top: 2px; }
textarea.field { height: 27px; resize: none; }

.props { display: flex; flex-direction: column; min-height: 0; overflow: hidden; }
.ptabs { display: flex; align-items: center; gap: 2px; height: 23px; padding: 0 4px; flex: none; }
.ptabs button { width: 15px; height: 14px; }
.ptabs .on { background: #ccd5ef; }
.pbody { flex: 1; min-height: 0; display: flex; justify-content: space-between; padding-right: 5px; }
.groups { width: 91px; padding: 1px 0 0 3px; }
.groups h2 { height: 14px; line-height: 14px; }
.prow { display: grid; grid-template-columns: 39px 39px; column-gap: 2px; align-items: center; height: 12px; margin-left: 8px; white-space: nowrap; }
.prow.button { height: 13px; }
.name { overflow: hidden; }
.cell { height: 11px; width: 100%; background: #fff; padding: 0 2px; }
.numbox { display: grid; grid-template-columns: 1fr 6px; gap: 1px; height: 11px; }
.numbox .spin { width: 6px; }
.sel { display: flex; align-items: center; }
.sel select { width: 30px; }
.push-button { height: 12px; border: 1px solid #ccd2e0; }
.filebox { display: grid; grid-template-columns: 1fr 12px; border: 1px solid #ccd2e0; color: #85888e; height: 12px; }
.filebox .cell { height: 10px; padding: 0; }
.filebox button { border-left: 1px solid #ccd2e0; }
.scroll { width: 3px; height: 283px; background: #bfc1c6; border-radius: 2px; }
.side { display: flex; flex-direction: column; padding-top: 10px; background: #e1e2e6; }
.side button { height: 19px; flex: none; }
.side button:nth-child(n+3) { background: #d8d9dc; }

.status { flex: none; display: grid; grid-template-columns: 18px 38px 46px 55px 40px 41px 105px 56px 23px 26px 29px 44px 70px 102px 46px 24px 1fr 12px; align-items: stretch; height: 11px; padding-left: 6px; border-top: 1px solid #f3f4f7; white-space: nowrap; line-height: 10px; }
.status button { justify-content: flex-start; }
.status .lit { justify-content: center; background: #cdd5ee; color: #17191d; font-weight: 700; margin-right: 2px; }
.status .apart { padding-left: 8px; }
.layer { display: flex; align-items: center; gap: 4px; }
.layer i { width: 8px; height: 8px; background: #c40000; border: 1px solid #5a2020; }
.lockcell { gap: 3px; }
.watermark { position: absolute; left: 835px; bottom: 19px; display: grid; color: #b2b4b9; opacity: .9; white-space: nowrap; pointer-events: none; }
.watermark strong { font-size: 10px; line-height: 14px; font-weight: 400; }
.watermark span { font-size: 7px; line-height: 10px; }
</style>
